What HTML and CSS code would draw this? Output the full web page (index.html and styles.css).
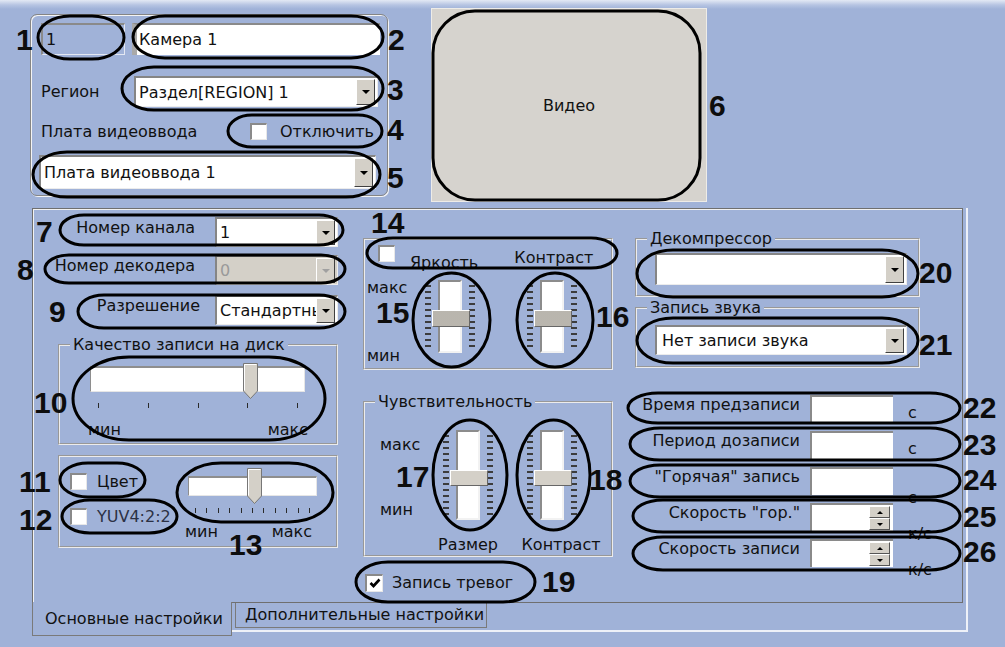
FILE: index.html
```html
<!DOCTYPE html>
<html lang="ru">
<head>
    <meta charset="UTF-8">
    <meta name="viewport" content="width=device-width, initial-scale=1.0">
    <title>Камера 1 - настройки</title>
    <link rel="stylesheet" href="styles.css">
</head>
<body>
<div class="screen">

    <div class="top">
        <div class="cam-card">
            <div class="name-row">
                <div class="id-field">1</div>
                <div class="name-field">Камера 1</div>
            </div>
            <div class="form-row region-row">
                <span class="row-label region-label">Регион</span>
                <div class="combo region-combo"><span class="combo-text">Раздел[REGION] 1</span><span class="drop"></span></div>
            </div>
            <div class="form-row board-row">
                <span class="row-label board-label">Плата видеоввода</span>
                <span class="check"><span class="box"></span><span class="check-text">Отключить</span></span>
            </div>
            <div class="combo board-combo"><span class="combo-text">Плата видеоввода 1</span><span class="drop"></span></div>
        </div>
        <div class="video">Видео</div>
    </div>

    <div class="tabctl">
        <div class="page">

            <!-- left column -->
            <div class="col">
                <div class="ctl-row first">
                    <span class="ctl-label">Номер канала</span>
                    <div class="combo small"><span class="combo-text">1</span><span class="drop"></span></div>
                </div>
                <div class="ctl-row">
                    <span class="ctl-label">Номер декодера</span>
                    <div class="combo small disabled"><span class="combo-text">0</span><span class="drop"></span></div>
                </div>
                <div class="ctl-row res-row">
                    <span class="ctl-label">Разрешение</span>
                    <div class="combo small"><span class="combo-text">Стандартный</span><span class="drop"></span></div>
                </div>

                <fieldset class="group quality">
                    <legend>Качество записи на диск</legend>
                    <div class="hslider quality-slider">
                        <div class="htrack"></div>
                        <svg class="hthumb" style="left: 153px" width="15" height="36" viewBox="0 0 15 36">
                            <path d="M0.5 0.5H14.5V28L7.5 35.5L0.5 28Z" fill="#d4d0c8" stroke="#777"/>
                            <path d="M1.5 27.5V1.5H13.5" fill="none" stroke="#fff"/>
                        </svg>
                        <div class="hticks"><i></i><i></i><i></i><i></i><i></i></div>
                        <div class="range"><span>мин</span><span>макс</span></div>
                    </div>
                </fieldset>

                <fieldset class="group color">
                    <div class="checks">
                        <span class="check"><span class="box"></span><span class="check-text">Цвет</span></span>
                        <span class="check yuv"><span class="box"></span><span class="check-text">YUV4:2:2</span></span>
                    </div>
                    <div class="hslider color-slider">
                        <div class="htrack"></div>
                        <svg class="hthumb" style="left: 59px" width="15" height="36" viewBox="0 0 15 36">
                            <path d="M0.5 0.5H14.5V28L7.5 35.5L0.5 28Z" fill="#d4d0c8" stroke="#777"/>
                            <path d="M1.5 27.5V1.5H13.5" fill="none" stroke="#fff"/>
                        </svg>
                        <div class="hticks"><i></i><i></i><i></i><i></i><i></i><i></i><i></i><i></i><i></i><i></i><i></i></div>
                        <div class="range"><span>мин</span><span>макс</span></div>
                    </div>
                </fieldset>
            </div>

            <!-- middle column -->
            <div class="col">
                <fieldset class="group picture">
                    <div class="bc-head">
                        <span class="box"></span>
                        <span class="bright">Яркость</span>
                        <span class="contrast">Контраст</span>
                    </div>
                    <div class="vrow">
                        <div class="scale"><span>макс</span><span>мин</span></div>
                        <div class="vslider">
                            <div class="vticks"></div><div class="vtrack"></div><div class="vticks"></div>
                            <div class="vthumb dotted"></div>
                        </div>
                        <div class="vslider second">
                            <div class="vticks"></div><div class="vtrack"></div><div class="vticks"></div>
                            <div class="vthumb dotted"></div>
                        </div>
                    </div>
                </fieldset>

                <fieldset class="group sens">
                    <legend>Чувствительность</legend>
                    <div class="vrow">
                        <div class="scale"><span>макс</span><span>мин</span></div>
                        <div class="vslider tall">
                            <div class="vticks"></div><div class="vtrack"></div><div class="vticks"></div>
                            <div class="vthumb"></div>
                        </div>
                        <div class="vslider tall second">
                            <div class="vticks"></div><div class="vtrack"></div><div class="vticks"></div>
                            <div class="vthumb"></div>
                        </div>
                    </div>
                    <div class="captions"><span>Размер</span><span>Контраст</span></div>
                </fieldset>

                <span class="check alarm">
                    <span class="box checked">
                        <svg width="12" height="12" viewBox="0 0 12 12"><path d="M1.5 6L4.5 9L10.5 2.5" fill="none" stroke="#000" stroke-width="2.6"/></svg>
                    </span>
                    <span class="check-text">Запись тревог</span>
                </span>
            </div>

            <!-- right column -->
            <div class="col">
                <fieldset class="group decomp">
                    <legend>Декомпрессор</legend>
                    <div class="combo wide"><span class="combo-text"></span><span class="drop"></span></div>
                </fieldset>
                <fieldset class="group sound">
                    <legend>Запись звука</legend>
                    <div class="combo wide"><span class="combo-text">Нет записи звука</span><span class="drop"></span></div>
                </fieldset>

                <div class="rates">
                    <div class="rate-row">
                        <span class="rate-label">Время предзаписи</span>
                        <div class="rate-input"></div>
                        <span class="unit">с</span>
                    </div>
                    <div class="rate-row">
                        <span class="rate-label">Период дозаписи</span>
                        <div class="rate-input"></div>
                        <span class="unit">с</span>
                    </div>
                    <div class="rate-row">
                        <span class="rate-label">"Горячая" запись</span>
                        <div class="rate-input"></div>
                        <span class="unit low">с</span>
                    </div>
                    <div class="rate-row">
                        <span class="rate-label">Скорость "гор."</span>
                        <div class="rate-input"><span class="spinner"><span class="spin-btn up"></span><span class="spin-btn down"></span></span></div>
                        <span class="unit low">к/с</span>
                    </div>
                    <div class="rate-row">
                        <span class="rate-label">Скорость записи</span>
                        <div class="rate-input"><span class="spinner"><span class="spin-btn up"></span><span class="spin-btn down"></span></span></div>
                        <span class="unit low">к/с</span>
                    </div>
                </div>
            </div>
        </div>

        <div class="tabbar">
            <div class="tab active">Основные настройки</div>
            <div class="tab">Дополнительные настройки</div>
        </div>
    </div>

    <!-- callouts drawn over the dialog -->
    <svg class="marks" width="1005" height="647" viewBox="0 0 1005 647">
        <g fill="none" stroke="#000" stroke-width="3">
            <rect x="38" y="16" width="86" height="43" rx="32" ry="21.5"/>
            <rect x="133" y="16" width="250" height="42" rx="32" ry="21"/>
            <rect x="122" y="67" width="261" height="43" rx="32" ry="21.5"/>
            <rect x="228" y="115" width="154" height="32" rx="24" ry="16"/>
            <rect x="33" y="152" width="347" height="45" rx="34" ry="22.5"/>
            <rect x="433" y="11" width="267" height="189" rx="42" ry="42"/>
            <rect x="60" y="215" width="283" height="30" rx="24" ry="15"/>
            <rect x="45" y="255" width="300" height="28" rx="24" ry="14"/>
            <rect x="78" y="295" width="267" height="33" rx="26" ry="16.5"/>
            <rect x="73" y="357" width="252" height="83" rx="56" ry="41.5"/>
            <rect x="60" y="463" width="85" height="34" rx="28" ry="17"/>
            <rect x="62" y="500" width="115" height="33" rx="28" ry="16.5"/>
            <rect x="177" y="463" width="156" height="59" rx="44" ry="29.5"/>
            <rect x="367" y="238" width="250" height="30" rx="26" ry="15"/>
            <ellipse cx="451.5" cy="320" rx="38.5" ry="47"/>
            <ellipse cx="555" cy="320" rx="38" ry="47"/>
            <ellipse cx="470" cy="475" rx="37" ry="55"/>
            <ellipse cx="553.5" cy="475" rx="36.5" ry="55"/>
            <rect x="356" y="562" width="179" height="40" rx="32" ry="20"/>
            <rect x="637" y="250" width="281" height="47" rx="36" ry="23.5"/>
            <rect x="637" y="318" width="281" height="45" rx="36" ry="22.5"/>
            <rect x="628" y="393" width="332" height="30" rx="30" ry="15"/>
            <rect x="630" y="428" width="330" height="32" rx="30" ry="16"/>
            <rect x="630" y="465" width="330" height="32" rx="30" ry="16"/>
            <rect x="633" y="500" width="327" height="32" rx="30" ry="16"/>
            <rect x="633" y="537" width="327" height="33" rx="30" ry="16.5"/>
        </g>
        <g class="nums">
            <text x="16" y="50">1</text>
            <text x="388" y="50">2</text>
            <text x="387" y="100">3</text>
            <text x="387" y="140">4</text>
            <text x="387" y="188">5</text>
            <text x="709" y="116">6</text>
            <text x="36" y="242">7</text>
            <text x="17" y="280">8</text>
            <text x="49" y="322">9</text>
            <text x="34" y="413">10</text>
            <text x="19" y="492">11</text>
            <text x="19" y="530">12</text>
            <text x="229" y="555">13</text>
            <text x="371" y="233">14</text>
            <text x="376" y="323">15</text>
            <text x="596" y="327">16</text>
            <text x="396" y="487">17</text>
            <text x="589" y="490">18</text>
            <text x="542" y="592">19</text>
            <text x="919" y="283">20</text>
            <text x="919" y="355">21</text>
            <text x="963" y="418">22</text>
            <text x="963" y="455">23</text>
            <text x="963" y="490">24</text>
            <text x="963" y="527">25</text>
            <text x="963" y="562">26</text>
        </g>
    </svg>
</div>
</body>
</html>
```

FILE: styles.css
```css
* {
    box-sizing: border-box;
}

body {
    margin: 0;
    font-family: "DejaVu Sans", Tahoma, sans-serif;
    font-size: 16px;
    color: #111;
    background-color: #a0b2d8;
}

.screen {
    position: relative;
    width: 1005px;
    height: 647px;
    overflow: hidden;
    background: linear-gradient(#e3e9f4 0, #b6c4e2 5px, #a0b2d8 9px);
}

/* ---- top block ---- */

.top {
    display: flex;
    align-items: flex-start;
    height: 208px;
    padding-left: 30px;
}

.cam-card {
    width: 358px;
    height: 182px;
    margin-top: 14px;
    padding: 8px 0 0 10px;
    border: 1px solid #858585;
    border-radius: 7px;
    box-shadow: inset 1px 1px 0 #f4f4f4, 1px 1px 0 #f4f4f4;
}

.name-row {
    display: flex;
    height: 32px;
}

.id-field {
    width: 84px;
    padding-left: 3px;
    line-height: 29px;
    border-top: 2px solid #8a8a8a;
    border-left: 2px solid #8a8a8a;
    border-right: 1px solid #e4e8f2;
    border-bottom: 1px solid #e4e8f2;
}

.name-field {
    width: 248px;
    margin-left: 7px;
    padding-left: 2px;
    line-height: 29px;
    background-color: #fff;
    border-top: 2px solid #8a8a8a;
    border-left: 5px solid #a9a9a9;
}

.form-row {
    display: flex;
    align-items: center;
}

.region-row {
    height: 31px;
    margin-top: 21px;
}

.region-label {
    width: 93px;
}

.region-combo {
    width: 244px;
    height: 31px;
}

.board-row {
    height: 20px;
    margin-top: 14px;
}

.board-label {
    width: 209px;
}

.board-row .check-text {
    margin-left: 13px;
}

.board-combo {
    width: 337px;
    height: 34px;
    margin: 14px 0 0 -2px;
}

.video {
    display: flex;
    align-items: center;
    justify-content: center;
    width: 276px;
    height: 194px;
    margin: 8px 0 0 43px;
    background-color: #d6d3ce;
    border: 1px solid #eeece8;
}

/* ---- shared controls ---- */

.combo {
    display: flex;
    align-items: stretch;
    padding: 1px 2px 1px 3px;
    background-color: #fff;
    border-top: 2px solid #858585;
    border-left: 2px solid #858585;
    border-right: 1px solid #ececec;
    border-bottom: 1px solid #ececec;
}

.combo-text {
    flex: 1;
    align-self: center;
    white-space: nowrap;
    overflow: hidden;
}

.drop {
    display: flex;
    align-items: center;
    justify-content: center;
    width: 19px;
    background-color: #d4d0c8;
    border: 1px solid;
    border-color: #fff #404040 #404040 #fff;
}

.drop::after {
    content: "";
    border-left: 4px solid transparent;
    border-right: 4px solid transparent;
    border-top: 4px solid #000;
}

.combo.disabled {
    background-color: #d4d0c8;
    color: #9a9a9a;
}

.combo.disabled .drop::after {
    border-top-color: #a0a0a0;
}

.check {
    display: flex;
    align-items: center;
}

.box {
    display: inline-flex;
    align-items: center;
    justify-content: center;
    width: 17px;
    height: 17px;
    background-color: #fff;
    border-top: 2px solid #8a8a8a;
    border-left: 2px solid #8a8a8a;
    border-right: 1px solid #e8e8e8;
    border-bottom: 1px solid #e8e8e8;
}

.group {
    margin: 0;
    padding: 0;
    min-width: 0;
    border: 2px groove #ececec;
}

.group legend {
    margin-left: 10px;
    padding: 0 3px;
    line-height: 18px;
}

/* ---- tab control ---- */

.tabctl {
    width: 936px;
    height: 424px;
    margin-left: 32px;
    border-right: 2px solid #eef1f8;
    border-bottom: 2px solid #eef1f8;
}

.page {
    display: grid;
    grid-template-columns: 322px 270px 1fr;
    width: 931px;
    height: 395px;
    border: 1px solid #6f6f6f;
    box-shadow: inset 1px 1px 0 #f2f2f2;
}

.col {
    display: flex;
    flex-direction: column;
    align-items: flex-start;
}

.tabbar {
    display: flex;
    align-items: flex-start;
}

.tab {
    width: 252px;
    height: 25px;
    margin-left: 3px;
    padding-left: 9px;
    line-height: 24px;
    border: 1px solid #7a7a7a;
    border-top: none;
}

.tab.active {
    width: 200px;
    height: 34px;
    margin: -1px 0 0 0;
    padding-left: 12px;
    line-height: 34px;
    background-color: #a0b2d8;
}

/* ---- left column ---- */

.ctl-row {
    display: flex;
    height: 30px;
    margin-top: 8px;
}

.ctl-row.res-row {
    margin-top: 10px;
}

.ctl-label {
    width: 172px;
    padding-right: 10px;
    text-align: right;
    line-height: 22px;
}

.res-row .ctl-label {
    padding-right: 5px;
}

.combo.small {
    width: 123px;
    margin-left: 10px;
}

.quality {
    width: 280px;
    height: 109px;
    margin: 11px 0 0 25px;
}

.hslider {
    position: relative;
}

.htrack {
    background-color: #fff;
    border-top: 2px solid #8e8e8e;
    border-left: 1px solid #8e8e8e;
    border-right: 1px solid #e6e6e6;
    border-bottom: 1px solid #e6e6e6;
}

.hthumb {
    position: absolute;
    top: -3px;
}

.hticks {
    display: flex;
    justify-content: space-between;
    height: 5px;
}

.hticks i {
    width: 1px;
    height: 5px;
    background-color: #2a2a2a;
}

.range {
    display: flex;
    justify-content: space-between;
    line-height: 18px;
}

.quality-slider {
    width: 215px;
    margin: 12px 0 0 30px;
}

.quality-slider .htrack {
    height: 26px;
}

.quality-slider .hticks {
    margin-top: 11px;
    padding: 0 7px 0 8px;
}

.quality-slider .range {
    margin: 13px -3px 0 -2px;
}

.color {
    display: flex;
    width: 280px;
    height: 93px;
    margin: 10px 0 0 25px;
}

.checks {
    display: flex;
    flex-direction: column;
    width: 108px;
    margin: 16px 0 0 10px;
}

.checks .check {
    height: 17px;
}

.checks .check-text {
    margin-left: 10px;
}

.check.yuv {
    margin-top: 18px;
}

.yuv .check-text {
    color: #2c3144;
}

.color-slider {
    width: 129px;
    margin: 19px 0 0 10px;
}

.color-slider .htrack {
    height: 20px;
}

.color-slider .hthumb {
    top: -8px;
}

.color-slider .hticks {
    margin-top: 12px;
    padding: 0 7px;
}

.color-slider .range {
    margin: 10px 5px 0 -3px;
}

/* ---- middle column ---- */

.picture {
    width: 250px;
    height: 132px;
    margin: 29px 0 0 8px;
}

.bc-head {
    display: flex;
    align-items: flex-start;
    height: 17px;
    margin: 5px 0 0 13px;
}

.bright {
    margin: 9px 0 0 15px;
    line-height: 18px;
}

.contrast {
    margin: 4px 0 0 36px;
    line-height: 18px;
}

.vrow {
    display: flex;
    align-items: flex-start;
    margin-top: 18px;
}

.scale {
    display: flex;
    flex-direction: column;
    justify-content: space-between;
    width: 60px;
    height: 84px;
    padding-left: 2px;
    line-height: 16px;
}

.vslider {
    position: relative;
    display: flex;
    justify-content: space-between;
    width: 50px;
    height: 73px;
}

.vslider.second {
    margin-left: 52px;
}

.vticks {
    width: 6px;
    margin: 5px 0;
    background: repeating-linear-gradient(to bottom, #3c3c3c 0 2px, transparent 2px 6px);
}

.vtrack {
    width: 24px;
    background-color: #fff;
    border: 2px solid;
    border-color: #8c8c8c #f2f2f2 #f2f2f2 #8c8c8c;
}

.vthumb {
    position: absolute;
    left: 7px;
    top: 30px;
    width: 38px;
    height: 17px;
    background-color: #d4d0c8;
    border: 1px solid;
    border-color: #fff #666 #666 #fff;
}

.vthumb.dotted {
    background-color: #e4e2de;
    background-image: radial-gradient(#b8b4ac 0.7px, transparent 0.9px);
    background-size: 2px 2px;
}

.sens {
    width: 250px;
    height: 164px;
    margin: 23px 0 0 8px;
}

.sens .vrow {
    margin-top: 19px;
}

.sens .scale {
    width: 78px;
    height: 81px;
    margin-top: 7px;
    padding-left: 15px;
}

.vslider.tall {
    height: 90px;
}

.vslider.tall .vthumb {
    top: 40px;
    height: 16px;
}

.sens .vslider.second {
    margin-left: 34px;
}

.captions {
    display: flex;
    margin-top: 16px;
    padding-left: 63px;
    line-height: 18px;
}

.captions span {
    width: 80px;
    text-align: center;
}

.captions span + span {
    width: 84px;
    margin-left: 11px;
}

.check.alarm {
    margin: 16px 0 0 10px;
}

.alarm .box {
    width: 18px;
    height: 18px;
}

.alarm .check-text {
    margin-left: 9px;
}

/* ---- right column ---- */

.decomp {
    width: 285px;
    height: 67px;
    margin: 21px 0 0 10px;
}

.sound {
    width: 285px;
    height: 69px;
    margin: 2px 0 0 10px;
}

.combo.wide {
    width: 252px;
    height: 32px;
    margin: 5px 0 0 18px;
    padding-left: 5px;
}

.sound .combo.wide {
    height: 30px;
    margin-top: 8px;
}

.rates {
    margin: 27px 0 0 15px;
}

.rate-row {
    display: flex;
    align-items: flex-start;
    height: 28px;
    margin-bottom: 8px;
}

.rate-label {
    width: 165px;
    padding-right: 5px;
    text-align: right;
    line-height: 20px;
}

.rate-input {
    display: flex;
    justify-content: flex-end;
    width: 83px;
    height: 28px;
    margin-left: 5px;
    background-color: #fff;
    border-top: 2px solid #8a8a8a;
    border-left: 2px solid #8a8a8a;
}

.spinner {
    display: flex;
    flex-direction: column;
    width: 21px;
    margin: 1px 3px 1px 0;
}

.spin-btn {
    display: flex;
    flex: 1;
    align-items: center;
    justify-content: center;
    background-color: #d4d0c8;
    border: 1px solid;
    border-color: #fff #555 #555 #fff;
}

.spin-btn::after {
    content: "";
    border-left: 3px solid transparent;
    border-right: 3px solid transparent;
}

.spin-btn.up::after {
    border-bottom: 3px solid #000;
}

.spin-btn.down::after {
    border-top: 3px solid #000;
}

.unit {
    margin: 9px 0 0 15px;
    line-height: 18px;
}

.unit.low {
    margin-top: 22px;
}

/* ---- callouts ---- */

.marks {
    position: absolute;
    left: 0;
    top: 0;
    pointer-events: none;
}

.nums text {
    font-family: "Liberation Sans", Arial, sans-serif;
    font-size: 30px;
    font-weight: bold;
    fill: #0d0d0d;
}
```
